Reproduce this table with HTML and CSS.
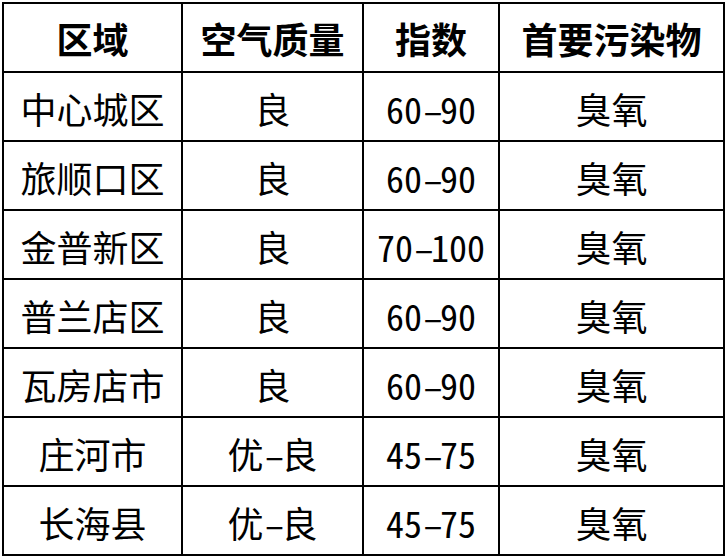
FILE: index.html
```html
<!DOCTYPE html>
<html lang="zh-CN">
<head>
<meta charset="utf-8">
<title>空气质量</title>
<link rel="stylesheet" href="styles.css">
</head>
<body>
<table class="aq">
  <colgroup>
    <col class="c-area">
    <col class="c-quality">
    <col class="c-index">
    <col class="c-pollutant">
  </colgroup>
  <thead>
    <tr><th>区域</th><th>空气质量</th><th>指数</th><th>首要污染物</th></tr>
  </thead>
  <tbody>
    <tr><td>中心城区</td><td>良</td><td class="num">60<span class="dash">-</span>90</td><td>臭氧</td></tr>
    <tr><td>旅顺口区</td><td>良</td><td class="num">60<span class="dash">-</span>90</td><td>臭氧</td></tr>
    <tr><td>金普新区</td><td>良</td><td class="num">70<span class="dash">-</span>100</td><td>臭氧</td></tr>
    <tr><td>普兰店区</td><td>良</td><td class="num">60<span class="dash">-</span>90</td><td>臭氧</td></tr>
    <tr><td>瓦房店市</td><td>良</td><td class="num">60<span class="dash">-</span>90</td><td>臭氧</td></tr>
    <tr><td>庄河市</td><td>优<span class="dash">-</span>良</td><td class="num">45<span class="dash">-</span>75</td><td>臭氧</td></tr>
    <tr><td>长海县</td><td>优<span class="dash">-</span>良</td><td class="num">45<span class="dash">-</span>75</td><td>臭氧</td></tr>
  </tbody>
</table>
</body>
</html>
```

FILE: styles.css
```css
html, body {
  margin: 0;
  padding: 0;
  background: #ffffff;
}
body {
  padding: 2px 0 0 2px;
  font-family: "Noto Sans CJK SC", "Noto Sans", sans-serif;
  color: #000000;
}
.aq {
  border-collapse: collapse;
  table-layout: fixed;
  width: 721px;
}
.c-area { width: 179px; }
.c-quality { width: 181px; }
.c-index { width: 136px; }
.c-pollutant { width: 225px; }
.aq th, .aq td {
  border: 2px solid #000000;
  height: 67px;
  padding: 0;
  text-align: center;
  vertical-align: middle;
  font-size: 36px;
  line-height: 1;
  white-space: nowrap;
}
.aq th {
  font-weight: 700;
}
.aq td {
  font-weight: 400;
  padding-top: 3px;
  height: 64px;
}
.num {
  font-feature-settings: "hwid" 1;
}
.dash {
  font-feature-settings: "fwid" 1;
  font-size: 22px;
  font-weight: 700;
  line-height: 1;
  letter-spacing: -4px;
  vertical-align: 2px;
}
```
